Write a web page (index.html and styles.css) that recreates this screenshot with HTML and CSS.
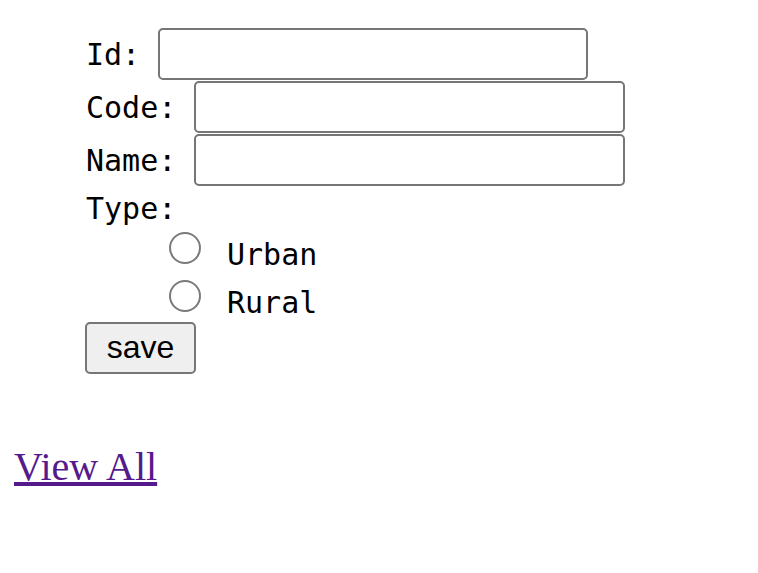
FILE: index.html
```html
<!DOCTYPE html>
<html>
<head>
<meta charset="utf-8">
<link rel="stylesheet" href="styles.css">
</head>
<body>
<form class="form">
  <div class="row"><span class="lbl">Id: </span><input class="field field-id" type="text"></div>
  <div class="row"><span class="lbl">Code: </span><input class="field" type="text"></div>
  <div class="row"><span class="lbl">Name: </span><input class="field" type="text"></div>
  <div class="type">Type:</div>
  <label class="radio-row"><input class="radio" type="radio" name="type"><span class="opt">Urban</span></label>
  <label class="radio-row"><input class="radio" type="radio" name="type"><span class="opt">Rural</span></label>
  <button class="save" type="button">save</button>
</form>
<div class="links"><a class="view" href="#">View All</a></div>
</body>
</html>
```
FILE: styles.css
```css
html, body {
  margin: 0;
  padding: 0;
  background: #ffffff;
}
.form {
  display: flex;
  flex-direction: column;
  align-items: flex-start;
  padding: 28px 0 0 86px;
  font-family: "DejaVu Sans Mono", monospace;
  font-size: 30px;
  color: #000;
}
.row {
  display: flex;
  align-items: center;
  height: 52px;
  margin-bottom: 1px;
}
.lbl {
  white-space: pre;
  line-height: 35px;
}
.field {
  box-sizing: border-box;
  width: 431px;
  height: 52px;
  margin: 0;
  border: 2px solid #767676;
  border-radius: 5px;
  background: #fff;
  padding: 0 4px;
  font: inherit;
}
.field-id {
  width: 430px;
}
.type {
  line-height: 34px;
  padding-top: 5px;
  height: 34px;
}
.radio-row {
  display: flex;
  align-items: flex-start;
  height: 48px;
  padding-left: 83px;
}
.radio {
  appearance: none;
  -webkit-appearance: none;
  box-sizing: border-box;
  width: 32px;
  height: 32px;
  margin: 6px 0 0 0;
  border: 2px solid #7a7a7a;
  border-radius: 50%;
  background: #fff;
}
.opt {
  line-height: 35px;
  margin-top: 11px;
  margin-left: 26px;
}
.save {
  box-sizing: border-box;
  width: 111px;
  height: 52px;
  margin: 0 0 0 -1px;
  padding: 0 0 2px 0;
  border: 2px solid #767676;
  border-radius: 5px;
  background: #efefef;
  font-family: "Liberation Sans", Arial, sans-serif;
  font-size: 32px;
  color: #000;
}
.links {
  margin-top: 70px;
  padding-left: 14px;
  font-family: "Liberation Serif", "Times New Roman", serif;
  font-size: 40px;
  line-height: 46px;
}
.view {
  color: #551a8b;
  text-decoration: underline;
}
```
